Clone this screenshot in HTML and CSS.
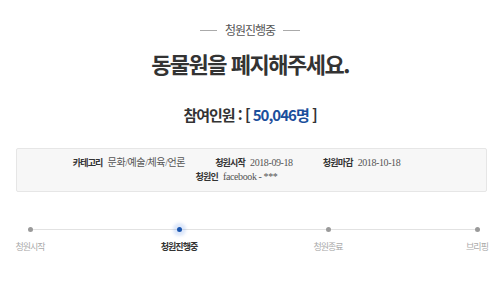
FILE: index.html
```html
<!DOCTYPE html>
<html lang="ko">

<head>
    <meta charset="UTF-8">
    <meta name="viewport" content="width=device-width, initial-scale=1.0">
    <title>청원</title>
    <link rel="stylesheet" href="styles.css">
</head>

<body>
    <div id="petition">
        <p class="status"><span class="dash"></span>청원진행중<span class="dash"></span></p>
        <h1 class="title">동물원을 폐지해주세요.</h1>
        <p class="count">참여인원 : [ <span class="num">50,046명</span> ]</p>

        <div class="info">
            <div class="info-row">
                <span class="info-item"><b>카테고리</b> <em>문화/예술/체육/언론</em></span>
                <span class="info-item"><b>청원시작</b> <em>2018-09-18</em></span>
                <span class="info-item"><b>청원마감</b> <em>2018-10-18</em></span>
            </div>
            <div class="info-row">
                <span class="info-item"><b>청원인</b> <em>facebook - ***</em></span>
            </div>
        </div>

        <ol class="steps">
            <li class="step"><i class="dot"></i><span>청원시작</span></li>
            <li class="step on"><i class="dot"></i><span>청원진행중</span></li>
            <li class="step"><i class="dot"></i><span>청원종료</span></li>
            <li class="step"><i class="dot"></i><span>브리핑</span></li>
        </ol>
    </div>
</body>

</html>
```

FILE: styles.css
```css
    body {
        margin: 0;
        font-family: "Noto Sans CJK KR", "Noto Sans", sans-serif;
        color: #333;
    }

    p, h1, ol {
        margin: 0;
        padding: 0;
    }

    .status {
        padding-top: 20px;
        font-size: 12px;
        line-height: 20px;
        letter-spacing: -1px;
        color: #555;
        display: flex;
        justify-content: center;
        align-items: center;
    }
    .status .dash {
        width: 17px;
        height: 1px;
        background-color: #aaa;
        margin: 0 8px;
    }

    .title {
        margin-top: 8px;
        font-size: 22px;
        line-height: 30px;
        letter-spacing: -1.5px;
        font-weight: 700;
        text-align: center;
        color: #333;
    }

    .count {
        margin-top: 26px;
        font-size: 15px;
        line-height: 22px;
        letter-spacing: -1px;
        font-weight: 700;
        text-align: center;
        color: #333;
    }
    .count .num {
        color: #1b4f9c;
    }

    .info {
        margin: 22px 13px 0 16px;
        padding: 7px 0;
        background-color: #f7f7f7;
        border: 1px solid #e6e6e6;
        border-radius: 2px;
    }
    .info-row {
        display: flex;
        justify-content: center;
        height: 14px;
        line-height: 14px;
    }
    .info-item {
        display: flex;
        align-items: center;
        margin-right: 30px;
        white-space: nowrap;
    }
    .info-item b {
        font-size: 9px;
        letter-spacing: -0.8px;
        font-weight: 700;
        color: #333;
        margin-right: 5px;
    }
    .info-item em {
        font-style: normal;
        font-family: "Liberation Serif", "Noto Sans CJK KR", serif;
        font-size: 10px;
        letter-spacing: -0.4px;
        color: #555;
    }

    .steps {
        list-style: none;
        margin: 35px 23px 0 30px;
        display: flex;
        justify-content: space-between;
        background: linear-gradient(#e2e2e2, #e2e2e2) no-repeat 0 2px / 100% 1px;
    }
    .step {
        width: 0;
        display: flex;
        flex-direction: column;
        align-items: center;
    }
    .step .dot {
        width: 5px;
        height: 5px;
        border-radius: 50%;
        background-color: #9a9a9a;
        flex-shrink: 0;
    }
    .step span {
        margin-top: 8px;
        font-size: 9px;
        line-height: 14px;
        letter-spacing: -1px;
        white-space: nowrap;
        color: #aaa;
    }
    .step.on .dot {
        background-color: #1a56b0;
        box-shadow: 0 0 3px 4px rgba(70, 130, 230, 0.18);
    }
    .step.on span {
        color: #333;
        font-weight: 700;
    }
```
